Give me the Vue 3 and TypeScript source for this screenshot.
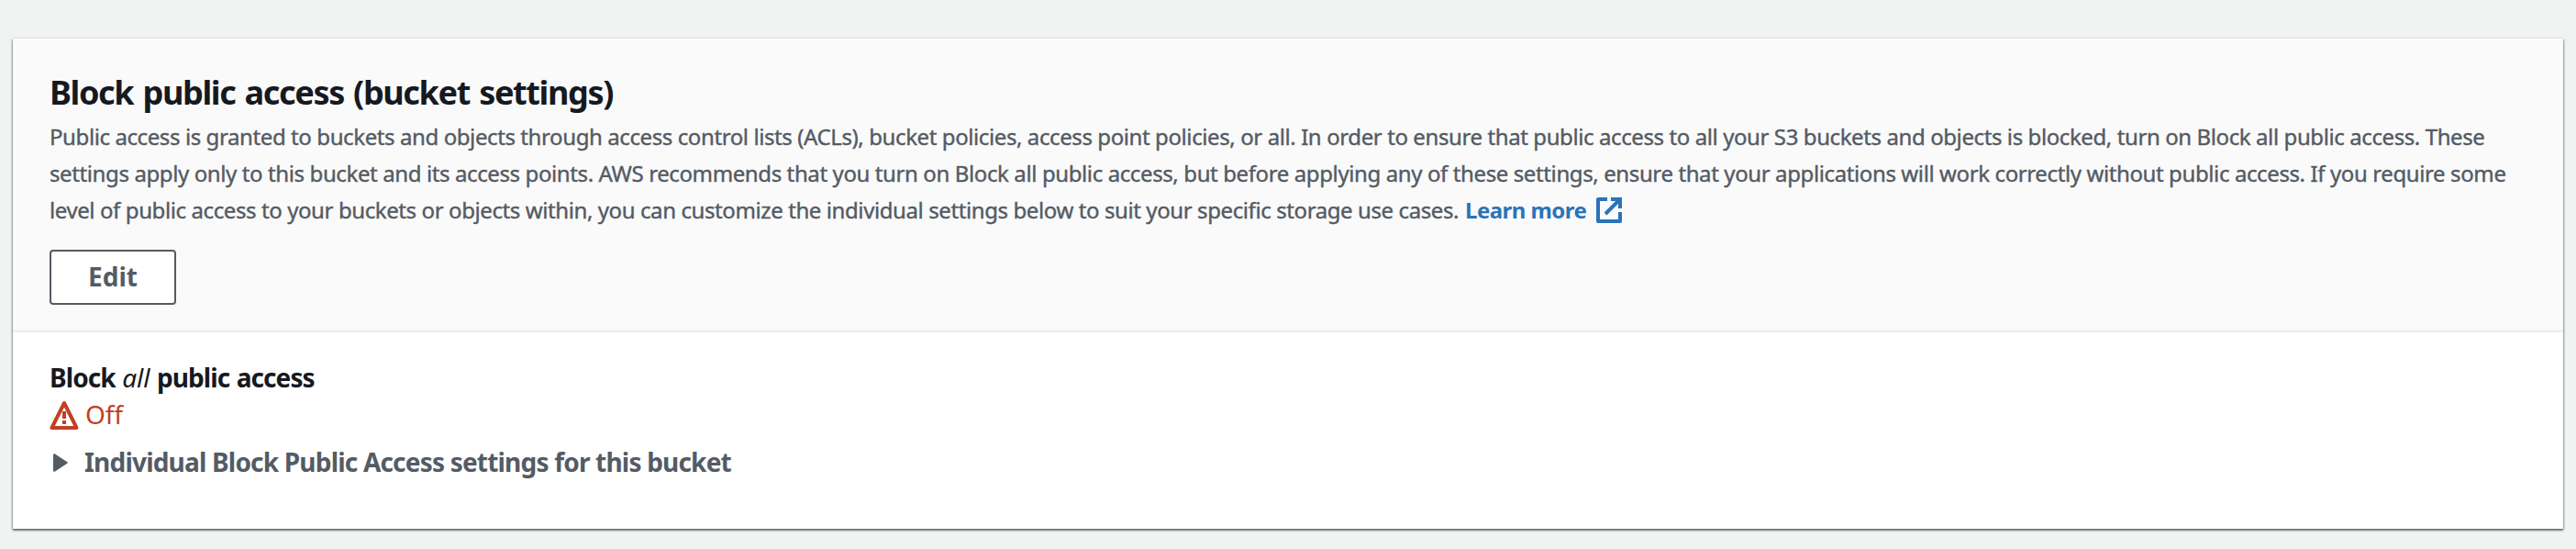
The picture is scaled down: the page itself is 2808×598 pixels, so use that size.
<script setup lang="ts">
import { ref } from 'vue'

const descriptionLines: string[] = [
  'Public access is granted to buckets and objects through access control lists (ACLs), bucket policies, access point policies, or all. In order to ensure that public access to all your S3 buckets and objects is blocked, turn on Block all public access. These',
  'settings apply only to this bucket and its access points. AWS recommends that you turn on Block all public access, but before applying any of these settings, ensure that your applications will work correctly without public access. If you require some',
  'level of public access to your buckets or objects within, you can customize the individual settings below to suit your specific storage use cases.',
]
const status = ref('Off')
</script>

<template>
  <main class="page">
    <section class="card">
      <header class="card-header">
        <h2 class="title">Block public access (bucket settings)</h2>
        <div class="description">
          <div v-for="(line, i) in descriptionLines" :key="i" class="line">
            <span>{{ line }}</span>
            <a v-if="i === descriptionLines.length - 1" class="link">
              <span>Learn more</span>
              <svg class="external" viewBox="0 0 28 28" fill="none" stroke="currentColor" stroke-width="4">
                <path d="M12 2H2V26H26V16" stroke-linejoin="round" />
                <path d="M16 2H26V12M26 2L10 18" />
              </svg>
            </a>
          </div>
        </div>
        <button class="edit" type="button">Edit</button>
      </header>
      <div class="card-body">
        <div class="label">Block <em>all</em> public access</div>
        <div class="status">
          <svg class="warning" viewBox="0 0 32 32" fill="none" stroke="currentColor" stroke-width="4">
            <path d="M16 3L2.5 30H29.5Z" stroke-linejoin="round" />
            <path d="M16 12V20M16 22V26" />
          </svg>
          <span>{{ status }}</span>
        </div>
        <div class="expander">
          <svg class="caret" viewBox="0 0 16 20" fill="currentColor">
            <path d="M0 1.6Q0 0 1.6 .3L15.3 9.2Q16.4 10 15.3 10.8L1.6 19.7Q0 20 0 18.4Z" />
          </svg>
          <span>Individual Block Public Access settings for this bucket</span>
        </div>
      </div>
    </section>
  </main>
</template>

<style>
body {
  background: #f2f3f3;
}
</style>

<style scoped>
.page {
  box-sizing: border-box;
  height: 598px;
  padding: 42px 14px 22px;
  background: #f1f3f3;
  font-family: "Noto Sans", "Open Sans", sans-serif;
  color: #16191f;
}
.card {
  box-sizing: border-box;
  height: 534px;
  background: #fff;
  box-shadow: 0 2px 2px 0 rgba(0, 28, 36, 0.4), 1px 1px 2px 0 rgba(0, 28, 36, 0.3), -1px 1px 2px 0 rgba(0, 28, 36, 0.3), 0 -2px 0 0 #eaeded;
}
.card-header {
  box-sizing: border-box;
  height: 320px;
  padding: 37px 40px 0;
  background: #fafafa;
  border-bottom: 2px solid #eaeded;
}
.title {
  margin: 0;
  font-size: 36px;
  line-height: 44px;
  font-weight: 700;
  letter-spacing: -1.35px;
  word-spacing: 2.2px;
}
.description {
  margin-top: 6px;
  font-size: 24px;
  line-height: 40px;
  letter-spacing: -0.402px;
  color: #545b64;
}
.line {
  display: flex;
  height: 40px;
  white-space: nowrap;
  -webkit-text-stroke: 0.4px currentColor;
}
.line:nth-child(2) {
  letter-spacing: -0.388px;
}
.link {
  display: flex;
  align-items: center;
  margin-left: 7px;
  color: #2a73b9;
  font-weight: 700;
  letter-spacing: -0.55px;
  -webkit-text-stroke: 0;
}
.external {
  width: 28px;
  height: 28px;
  margin-left: 11px;
}
.edit {
  display: block;
  box-sizing: border-box;
  width: 138px;
  height: 60px;
  margin-top: 23px;
  padding: 0 0 2px;
  border: 2px solid #545b64;
  border-radius: 4px;
  background: #fff;
  color: #545b64;
  font: inherit;
  font-size: 28px;
  line-height: 54px;
  font-weight: 700;
}
.card-body {
  padding: 29px 40px 0;
  font-size: 28px;
  line-height: 40px;
}
.label {
  font-weight: 700;
  letter-spacing: -0.9px;
  word-spacing: 1px;
}
.label em {
  font-weight: 400;
  letter-spacing: 0;
}
.status {
  display: flex;
  height: 40px;
  color: #c33f22;
}
.warning {
  width: 32px;
  height: 32px;
  margin: 5px 7px 0 0;
}
.expander {
  display: flex;
  align-items: center;
  margin-top: 12px;
  padding-left: 4px;
  color: #545b64;
  font-weight: 700;
  letter-spacing: -0.8px;
}
.caret {
  width: 16px;
  height: 20px;
  margin: 2px 18px 0 0;
}
</style>
